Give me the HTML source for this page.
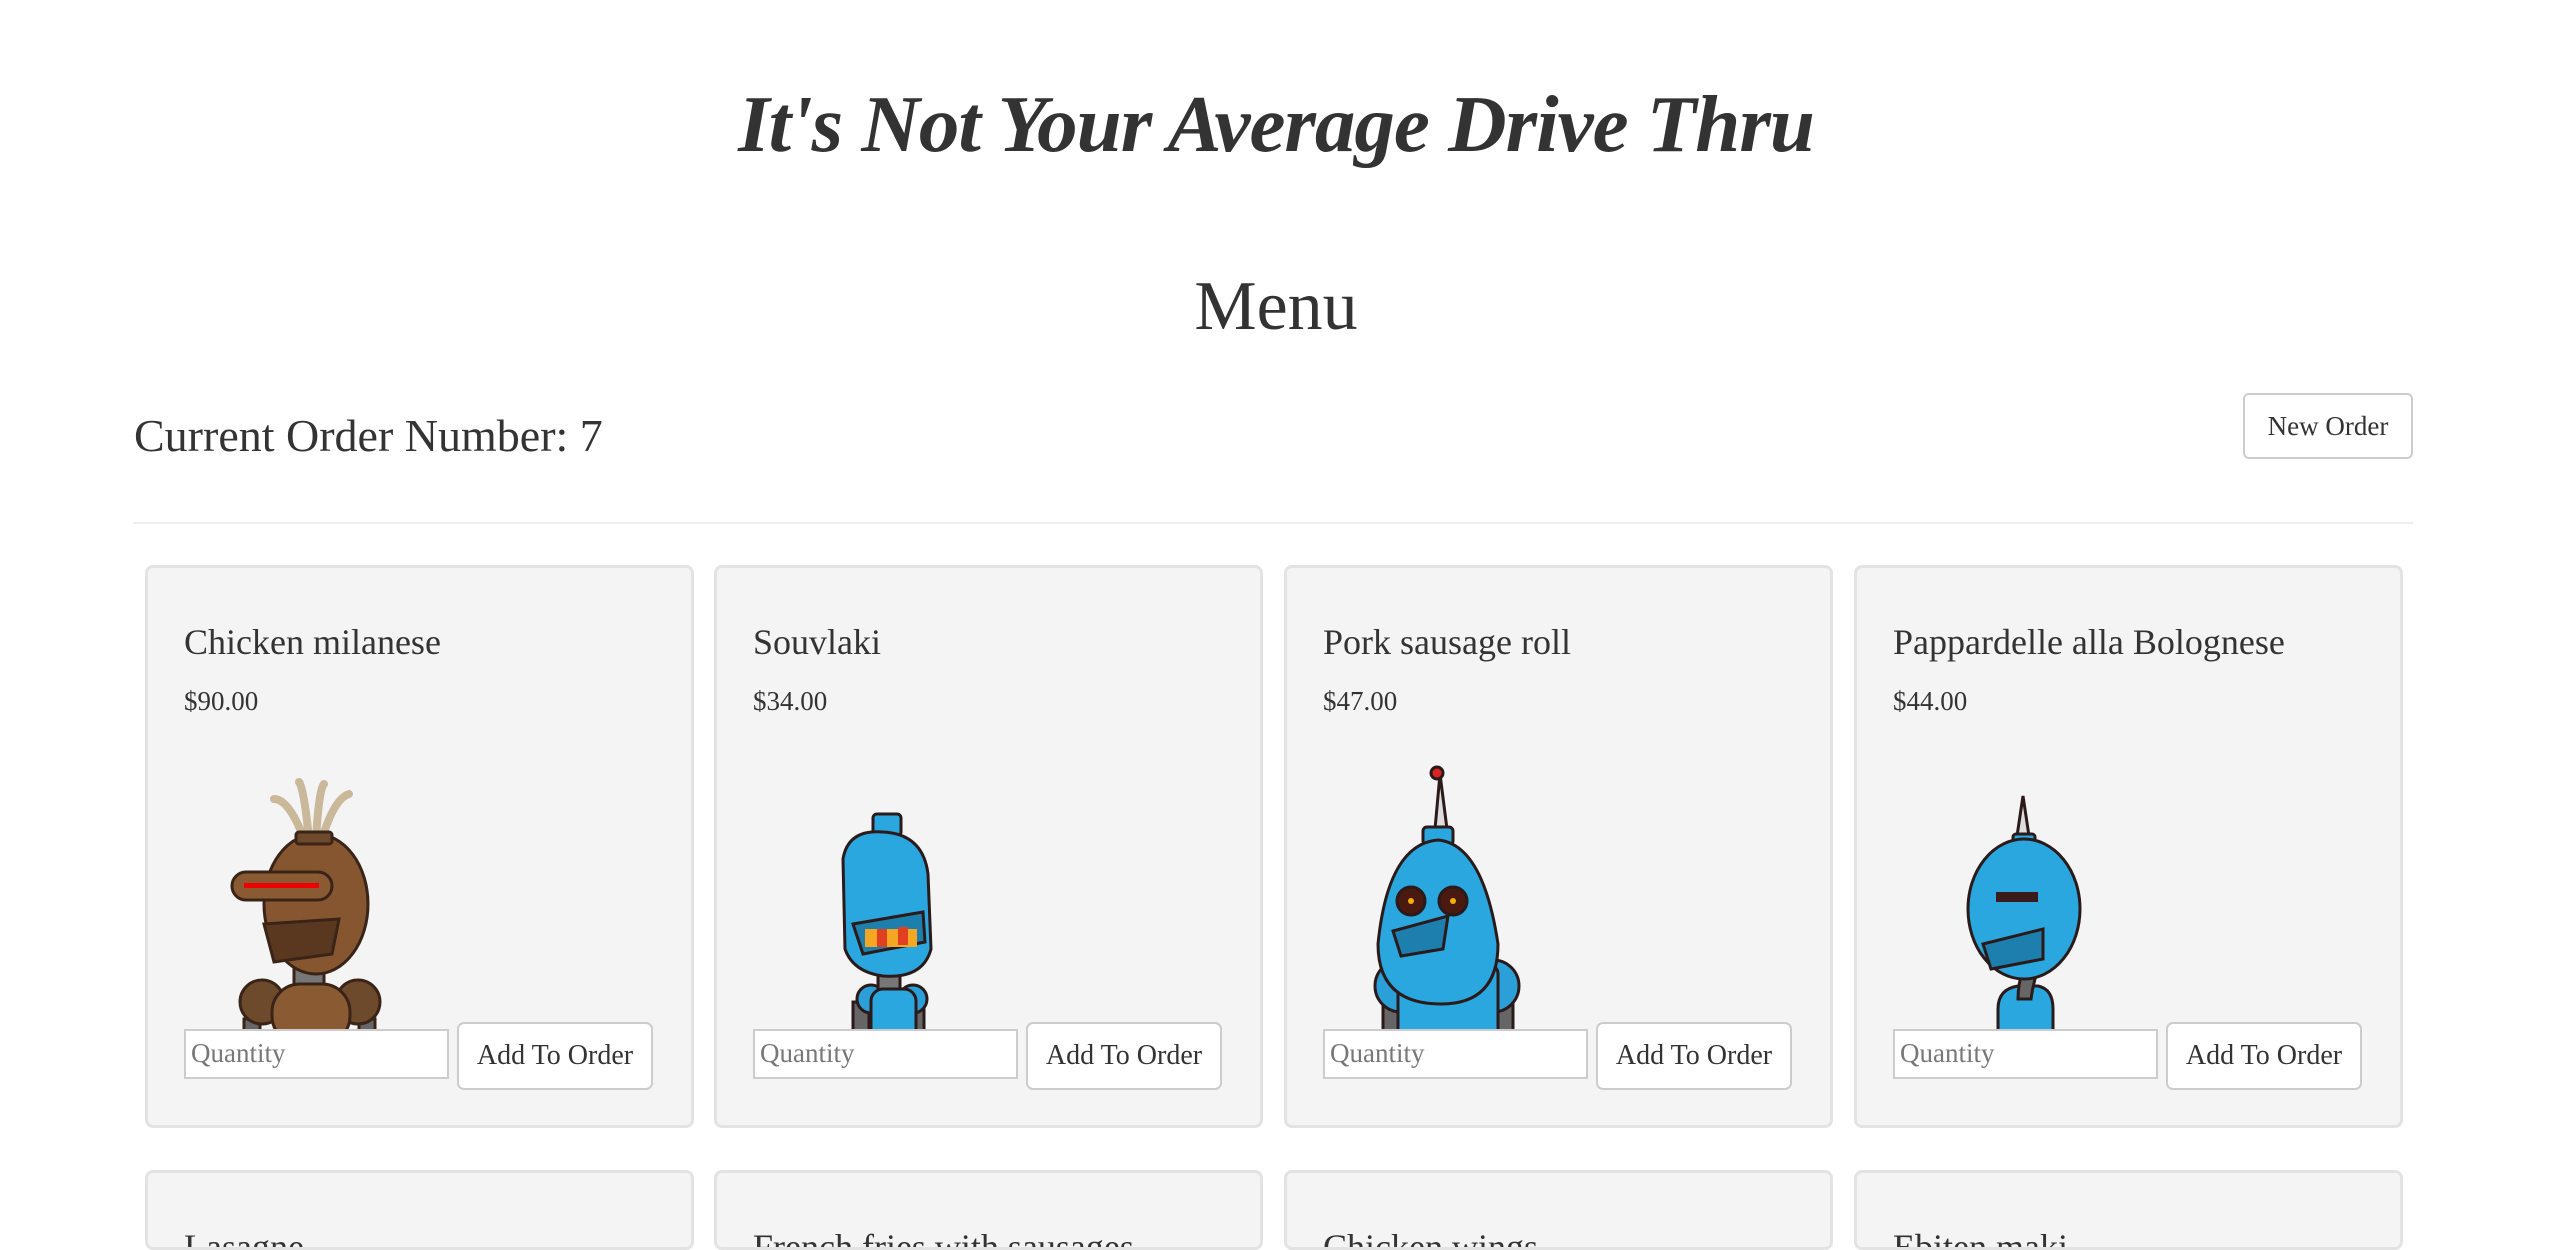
<!DOCTYPE html>
<html><head><meta charset="utf-8">
<style>
html,body{margin:0;padding:0;background:#fff;width:2552px;height:1250px;overflow:hidden;font-family:"Liberation Serif",serif;color:#333;}
#w{position:relative;width:2552px;height:1250px;overflow:hidden;}
.t{position:absolute;left:0;width:2552px;text-align:center;}
h1{position:absolute;left:0;width:2552px;text-align:center;top:74px;margin:0;font-size:81px;font-style:italic;font-weight:bold;letter-spacing:-1px;line-height:100px;color:#333;}
.menu{top:262px;font-size:70px;line-height:90px;}
.ord{position:absolute;left:134px;top:408px;font-size:46px;line-height:56px;}
.nbtn{position:absolute;left:2243px;top:393px;width:170px;height:66px;border:2px solid #ccc;border-radius:6px;box-sizing:border-box;background:#fff;font-size:27px;line-height:62px;text-align:center;}
.hr{position:absolute;left:133px;top:522px;width:2280px;height:2px;background:#eee;}
.card{position:absolute;width:549px;height:563px;background:#f4f4f4;border:3px solid #e3e3e3;border-radius:8px;box-sizing:border-box;overflow:hidden;}
.card .n{position:absolute;left:36px;top:52px;font-size:36px;line-height:44px;white-space:nowrap;}
.card .p{position:absolute;left:36px;top:118px;font-size:27px;line-height:30px;}
.card svg{position:absolute;left:36px;top:196px;}
.card .q{position:absolute;left:36px;top:461px;width:265px;height:50px;background:#fff;border:2px solid #ccc;box-sizing:border-box;font-size:27px;color:#777;line-height:44px;padding-left:5px;}
.card .b{position:absolute;left:309px;top:454px;width:196px;height:68px;background:#fff;border:2px solid #ccc;border-radius:7px;box-sizing:border-box;font-size:28px;line-height:64px;text-align:center;color:#333;}
</style></head><body><div id="w">
<h1>It's Not Your Average Drive Thru</h1>
<div class="t menu">Menu</div>
<div class="ord">Current Order Number: 7</div>
<div class="nbtn">New Order</div>
<div class="hr"></div>

<div class="card" style="left:145px;top:565px">
<div class="n">Chicken milanese</div><div class="p">$90.00</div>
<svg width="300" height="268" viewBox="0 0 300 268">
<g stroke="#3a2418" stroke-width="3">
<path d="M120 75 Q105 35 90 35 M125 75 Q120 25 115 18 M132 75 Q135 25 140 20 M138 75 Q150 35 165 30" stroke="#c9b89a" stroke-width="8" fill="none" stroke-linecap="round"/>
<rect x="60" y="255" width="16" height="20" fill="#666"/><rect x="175" y="255" width="16" height="20" fill="#666"/>
<circle cx="78" cy="238" r="22" fill="#6e4a2c"/><circle cx="174" cy="238" r="22" fill="#6e4a2c"/>
<rect x="110" y="195" width="30" height="30" fill="#777"/>
<rect x="88" y="220" width="78" height="60" rx="28" fill="#8a5a33"/>
<ellipse cx="132" cy="140" rx="52" ry="70" fill="#865630"/>
<rect x="112" y="68" width="36" height="12" rx="3" fill="#6e4a2c"/>
<rect x="48" y="108" width="100" height="28" rx="14" fill="#8a5a33"/>
<path d="M80 160 L155 155 L148 190 L90 198 Z" fill="#5a3820"/>
</g>
<rect x="60" y="119" width="75" height="5" fill="#e00"/>
</svg>
<div class="q">Quantity</div><div class="b">Add To Order</div></div>

<div class="card" style="left:714px;top:565px">
<div class="n">Souvlaki</div><div class="p">$34.00</div>
<svg width="300" height="268" viewBox="0 0 300 268">
<g stroke="#2a1a1a" stroke-width="3">
<rect x="100" y="238" width="16" height="40" fill="#666"/><rect x="155" y="238" width="16" height="40" fill="#666"/>
<circle cx="118" cy="235" r="14" fill="#2a9fd8"/><circle cx="160" cy="235" r="14" fill="#2a9fd8"/>
<rect x="125" y="210" width="22" height="25" fill="#777"/>
<rect x="118" y="225" width="45" height="60" rx="12" fill="#2aa7df"/>
<rect x="120" y="50" width="28" height="22" rx="4" fill="#2aa7df"/>
<path d="M90 95 Q95 65 130 68 Q170 70 175 110 L178 185 Q170 215 130 212 Q100 208 92 185 Z" fill="#2aa7df"/>
<path d="M100 160 L170 148 L172 178 L110 190 Z" fill="#1d7fae"/>
</g>
<rect x="112" y="165" width="52" height="18" fill="#f5a623"/><rect x="124" y="165" width="10" height="18" fill="#e04020"/><rect x="145" y="163" width="10" height="18" fill="#e04020"/>
</svg>
<div class="q">Quantity</div><div class="b">Add To Order</div></div>

<div class="card" style="left:1284px;top:565px">
<div class="n">Pork sausage roll</div><div class="p">$47.00</div>
<svg width="300" height="268" viewBox="0 0 300 268">
<g stroke="#2a1a1a" stroke-width="3">
<path d="M117 10 L112 65 L124 65 Z" fill="#ddd"/>
<circle cx="114" cy="9" r="6" fill="#d22"/>
<rect x="60" y="240" width="20" height="40" fill="#666"/><rect x="170" y="240" width="20" height="40" fill="#666"/>
<circle cx="78" cy="222" r="26" fill="#2a9fd8"/><circle cx="170" cy="222" r="26" fill="#2a9fd8"/>
<rect x="75" y="200" width="100" height="80" rx="10" fill="#2aa7df"/>
<rect x="100" y="63" width="30" height="18" rx="4" fill="#2aa7df"/>
<path d="M115 76 Q160 80 175 180 Q175 240 118 240 Q55 240 55 180 Q65 80 115 76 Z" fill="#2aa7df"/>
<circle cx="88" cy="137" r="14" fill="#4a1a10"/><circle cx="130" cy="137" r="14" fill="#4a1a10"/>
<path d="M70 167 L125 152 L120 185 L78 192 Z" fill="#1d7fae"/>
</g>
<circle cx="88" cy="137" r="3" fill="#f5b000"/><circle cx="130" cy="137" r="3" fill="#f5b000"/>
</svg>
<div class="q">Quantity</div><div class="b">Add To Order</div></div>

<div class="card" style="left:1854px;top:565px">
<div class="n">Pappardelle alla Bolognese</div><div class="p">$44.00</div>
<svg width="300" height="268" viewBox="0 0 300 268">
<g stroke="#2a1a1a" stroke-width="3">
<path d="M130 32 L124 72 L136 72 Z" fill="#ddd"/>
<path d="M105 245 Q105 225 125 222 L145 222 Q160 225 160 245 L160 280 L105 280 Z" fill="#2aa7df"/>
<path d="M130 205 Q125 220 125 235 L138 235 Q140 220 145 205 Z" fill="#666"/>
<rect x="120" y="70" width="22" height="12" rx="3" fill="#2aa7df"/>
<ellipse cx="131" cy="145" rx="56" ry="70" fill="#2aa7df"/>
<path d="M90 180 L150 165 L150 195 L98 205 Z" fill="#1d7fae"/>
</g>
<rect x="103" y="128" width="42" height="10" fill="#3a1a1a"/>
</svg>
<div class="q">Quantity</div><div class="b">Add To Order</div></div>

<div class="card" style="left:145px;top:1170px;height:80px"><div class="n">Lasagne</div></div>
<div class="card" style="left:714px;top:1170px;height:80px"><div class="n">French fries with sausages</div></div>
<div class="card" style="left:1284px;top:1170px;height:80px"><div class="n">Chicken wings</div></div>
<div class="card" style="left:1854px;top:1170px;height:80px"><div class="n">Ebiten maki</div></div>
</div></body></html>
